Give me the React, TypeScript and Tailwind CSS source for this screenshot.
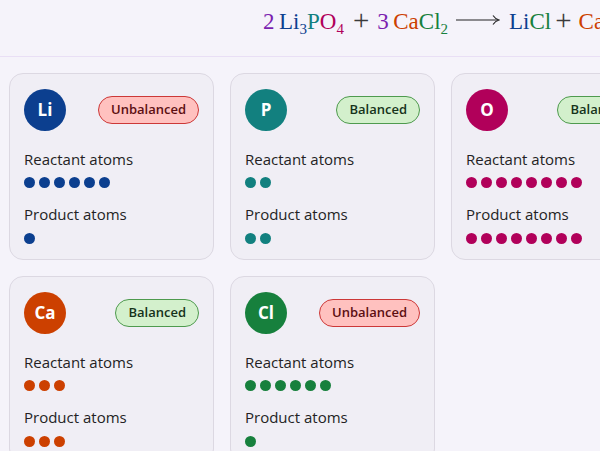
import React from "react";

type Element = {
  symbol: string;
  color: string;
  reactant: number;
  product: number;
};

const elements: Element[] = [
  { symbol: "Li", color: "bg-[#0c3f8f]", reactant: 6, product: 1 },
  { symbol: "P", color: "bg-[#12807f]", reactant: 2, product: 2 },
  { symbol: "O", color: "bg-[#b1005a]", reactant: 8, product: 8 },
  { symbol: "Ca", color: "bg-[#cc4000]", reactant: 3, product: 3 },
  { symbol: "Cl", color: "bg-[#17803d]", reactant: 6, product: 1 },
];

function Dots({ count, color }: { count: number; color: string }) {
  return (
    <div className="flex gap-[4px]">
      {Array.from({ length: count }).map((_, i) => (
        <span key={i} className={`h-[11px] w-[11px] rounded-full ${color}`} />
      ))}
    </div>
  );
}

function ElementCard({ el }: { el: Element }) {
  const balanced = el.reactant === el.product;
  return (
    <div className="flex flex-col rounded-[14px] border border-[#dcd8e2] bg-[#f0eef5] px-[14px] pt-[15px] pb-[15px]">
      <div className="flex items-center justify-between">
        <div
          className={`flex h-[42px] w-[42px] items-center justify-center rounded-full text-[17px] font-bold text-white ${el.color}`}
        >
          {el.symbol}
        </div>
        {balanced ? (
          <span className="rounded-full border border-[#4e9a4e] bg-[#d3f0cc] px-[12px] py-[3px] text-[13px] font-semibold text-[#16331a]">
            Balanced
          </span>
        ) : (
          <span className="rounded-full border border-[#cc3838] bg-[#ffc1bf] px-[12px] py-[3px] text-[13px] font-semibold text-[#5c0f12]">
            Unbalanced
          </span>
        )}
      </div>
      <div className="mt-[18px] flex flex-col gap-[8px]">
        <div className="text-[15px] leading-5 text-[#241f24]">Reactant atoms</div>
        <Dots count={el.reactant} color={el.color} />
      </div>
      <div className="mt-[16px] flex flex-col gap-[9px]">
        <div className="text-[15px] leading-5 text-[#241f24]">Product atoms</div>
        <Dots count={el.product} color={el.color} />
      </div>
    </div>
  );
}

function Sub({ children, className }: { children: React.ReactNode; className: string }) {
  return <span className={`align-[-5px] text-[15px] ${className}`}>{children}</span>;
}

function Plus({ className }: { className: string }) {
  return (
    <span className={`align-[-1px] text-[29px] leading-[0] text-[#3a3a3a] ${className}`}>+</span>
  );
}

function Arrow() {
  return (
    <svg
      width="44"
      height="12"
      viewBox="0 0 44 12"
      className="ml-[8px] mr-[9px] inline-block align-[3px]"
    >
      <path d="M0 6H42" stroke="#222" strokeWidth="1.1" />
      <path d="M37 1.5C38.5 3.8 40.5 5.3 43 6C40.5 6.7 38.5 8.2 37 10.5" fill="none" stroke="#222" strokeWidth="1.1" />
    </svg>
  );
}

export default function App() {
  return (
    <div
      className="min-h-[451px] w-[600px] overflow-hidden bg-[#f5f3fa]"
      style={{ fontFamily: '"Open Sans", "Noto Sans", sans-serif' }}
    >
      <header className="h-[57px] overflow-hidden border-b border-[#e9dff5] pl-[263px] pt-[8px]">
        <div
          className="whitespace-nowrap text-[23px] leading-[28px] text-[#333]"
          style={{ fontFamily: '"Liberation Serif", "DejaVu Serif", serif' }}
        >
          <span className="text-[#7b1fb0]">2</span>
          <span className="ml-[4.5px] text-[#0c3f8f]">Li</span>
          <Sub className="text-[#0c3f8f]">3</Sub>
          <span className="text-[#12807f]">P</span>
          <span className="text-[#b1005a]">O</span>
          <Sub className="text-[#b1005a]">4</Sub>
          <Plus className="ml-[9px] mr-[8px]" />
          <span className="text-[#7b1fb0]">3</span>
          <span className="ml-[4.5px] text-[#cc4000]">Ca</span>
          <span className="text-[#17803d]">Cl</span>
          <Sub className="text-[#17803d]">2</Sub>
          <Arrow />
          <span className="text-[#0c3f8f]">Li</span>
          <span className="text-[#17803d]">Cl</span>
          <Plus className="ml-[4px] mr-[7px]" />
          <span className="text-[#cc4000]">Ca</span>
          <Sub className="text-[#cc4000]">3</Sub>
          <span className="text-[#444]">(</span>
          <span className="text-[#12807f]">P</span>
          <span className="text-[#b1005a]">O</span>
          <Sub className="text-[#b1005a]">4</Sub>
          <span className="text-[#444]">)</span>
          <Sub className="text-[#444]">2</Sub>
        </div>
      </header>
      <main className="grid grid-cols-[205px_205px_205px] gap-4 pl-[9px] pt-4">
        {elements.map((el) => (
          <ElementCard key={el.symbol} el={el} />
        ))}
      </main>
    </div>
  );
}
